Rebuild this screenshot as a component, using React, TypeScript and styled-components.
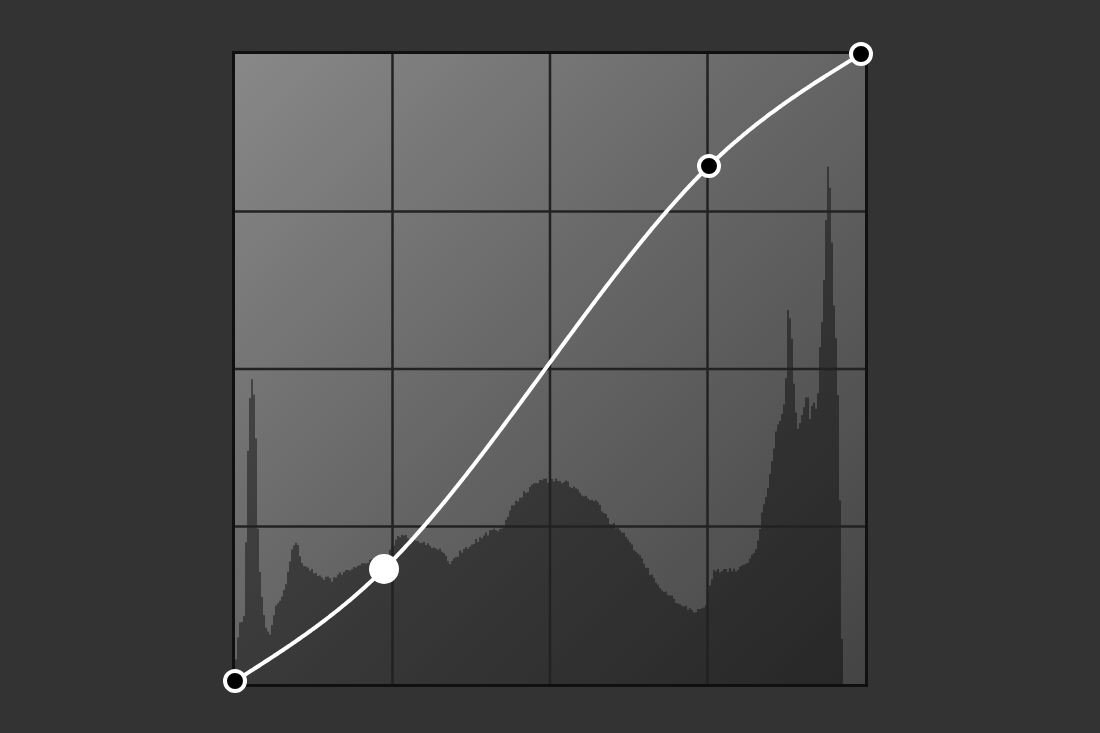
import React from 'react';
import styled, { createGlobalStyle } from 'styled-components';

const GlobalStyle = createGlobalStyle`
  html, body {
    margin: 0;
    padding: 0;
    background: #333333;
  }
  body {
    font-family: 'Liberation Sans', Arial, sans-serif;
  }
`;

const Page = styled.div`
  width: 100%;
  height: 733px;
  display: flex;
  justify-content: center;
  align-items: flex-start;
  padding-top: 51px;
  box-sizing: border-box;
  background: #333333;
`;

const CurvePanel = styled.div`
  position: relative;
  width: 630px;
  height: 630px;
  border: 3px solid #101010;
  background: linear-gradient(135deg, #888888 0%, #646464 50%, #444444 100%);
`;

const Chart = styled.svg`
  display: block;
  overflow: visible;
`;

const SIZE = 630;
const OX = 235;
const OY = 54;

// histogram outline, sampled off the reference (page coords: x, top y)
const histKeys: [number, number][] = [
  [235, 684], [237, 640], [240, 625], [244, 615], [246, 540], [248, 450],
  [250, 400], [252, 378], [254, 395], [256, 440], [258, 530], [261, 590],
  [265, 625], [270, 632], [275, 610], [285, 590], [290, 560], [293, 542],
  [298, 547], [303, 567], [312, 570], [322, 577], [332, 580], [342, 573],
  [352, 568], [362, 565], [375, 560], [388, 553], [395, 542], [402, 533],
  [415, 540], [428, 545], [442, 550], [450, 563], [460, 553], [473, 543],
  [490, 532], [503, 527], [510, 510], [520, 497], [537, 482], [553, 480],
  [567, 483], [580, 493], [597, 503], [610, 522], [627, 537], [637, 553],
  [650, 573], [663, 590], [680, 605], [695, 613], [705, 607], [710, 587],
  [713, 573], [723, 570], [737, 570], [747, 563], [757, 547], [762, 513],
  [767, 493], [772, 460], [777, 427], [783, 413], [786, 380], [788, 310],
  [790, 320], [792, 340], [795, 403], [798, 427], [803, 413], [807, 390],
  [810, 420], [813, 397], [817, 413], [820, 347], [823, 313], [826, 220],
  [828, 167], [831, 200], [833, 287], [836, 340], [838, 393], [840, 500],
  [841, 623], [842, 640], [843, 684],
];

const controlPoints = [
  { x: 0, y: 627, selected: false },
  { x: 149, y: 515, selected: true },
  { x: 474, y: 112, selected: false },
  { x: 626, y: 0, selected: false },
];

const gridAt = [157.5, 315, 472.5];

function noise(i: number) {
  const s = Math.sin(i * 12.9898 + 4.1414) * 43758.5453;
  return s - Math.floor(s) - 0.5;
}

function histTop(x: number) {
  for (let i = 0; i < histKeys.length - 1; i++) {
    const [x0, y0] = histKeys[i];
    const [x1, y1] = histKeys[i + 1];
    if (x >= x0 && x <= x1) {
      const t = x1 === x0 ? 0 : (x - x0) / (x1 - x0);
      return y0 + (y1 - y0) * t;
    }
  }
  return OY + SIZE;
}

function histogramPath() {
  const end = 843 - OX;
  let d = `M0,${SIZE}`;
  for (let x = 0, i = 0; x < end; x += 2, i++) {
    let y = histTop(x + OX + 1) - OY + noise(i) * 5;
    y = Math.min(SIZE, Math.max(0, y));
    d += ` L${x},${y.toFixed(1)} L${x + 2},${y.toFixed(1)}`;
  }
  return d + ` L${end},${SIZE} Z`;
}

// natural cubic spline through the control points
function curvePath() {
  const xs = controlPoints.map((p) => p.x);
  const ys = controlPoints.map((p) => p.y);
  const n = xs.length;
  const h = xs.slice(0, -1).map((x, i) => xs[i + 1] - x);
  const a: number[] = [];
  const b: number[] = [];
  const c: number[] = [];
  const r: number[] = [];
  for (let i = 1; i < n - 1; i++) {
    a.push(h[i - 1]);
    b.push(2 * (h[i - 1] + h[i]));
    c.push(h[i]);
    r.push(6 * ((ys[i + 1] - ys[i]) / h[i] - (ys[i] - ys[i - 1]) / h[i - 1]));
  }
  const m = r.length;
  for (let i = 1; i < m; i++) {
    const w = a[i] / b[i - 1];
    b[i] -= w * c[i - 1];
    r[i] -= w * r[i - 1];
  }
  const inner = new Array(m).fill(0);
  for (let i = m - 1; i >= 0; i--) {
    inner[i] = (r[i] - (i < m - 1 ? c[i] * inner[i + 1] : 0)) / b[i];
  }
  const M = [0, ...inner, 0];

  const pts: string[] = [];
  for (let s = 0; s < n - 1; s++) {
    const x0 = xs[s];
    const x1 = xs[s + 1];
    const hh = h[s];
    for (let x = x0; x <= x1; x += 2) {
      const y =
        (M[s] * Math.pow(x1 - x, 3)) / (6 * hh) +
        (M[s + 1] * Math.pow(x - x0, 3)) / (6 * hh) +
        (ys[s] / hh - (M[s] * hh) / 6) * (x1 - x) +
        (ys[s + 1] / hh - (M[s + 1] * hh) / 6) * (x - x0);
      pts.push(`${x.toFixed(1)},${y.toFixed(1)}`);
    }
  }
  pts.push(`${xs[n - 1]},${ys[n - 1]}`);
  return 'M' + pts.join(' L');
}

const CurveEditor: React.FC = () => {
  const hist = histogramPath();
  const curve = curvePath();

  return (
    <CurvePanel>
      <Chart width={SIZE} height={SIZE} viewBox={`0 0 ${SIZE} ${SIZE}`}>
        <path d={hist} fill="rgba(0, 0, 0, 0.42)" />
        {gridAt.map((g) => (
          <React.Fragment key={g}>
            <line x1={g} y1={0} x2={g} y2={SIZE} stroke="#222222" strokeWidth={2.5} />
            <line x1={0} y1={g} x2={SIZE} y2={g} stroke="#222222" strokeWidth={2.5} />
          </React.Fragment>
        ))}
        <path
          d={curve}
          fill="none"
          stroke="#ffffff"
          strokeWidth={4}
          strokeLinecap="round"
          strokeLinejoin="round"
        />
        {controlPoints.map((p, i) =>
          p.selected ? (
            <circle key={i} cx={p.x} cy={p.y} r={15} fill="#ffffff" />
          ) : (
            <circle
              key={i}
              cx={p.x}
              cy={p.y}
              r={10}
              fill="#000000"
              stroke="#ffffff"
              strokeWidth={4}
            />
          )
        )}
      </Chart>
    </CurvePanel>
  );
};

export default function App() {
  return (
    <>
      <GlobalStyle />
      <Page>
        <CurveEditor />
      </Page>
    </>
  );
}
